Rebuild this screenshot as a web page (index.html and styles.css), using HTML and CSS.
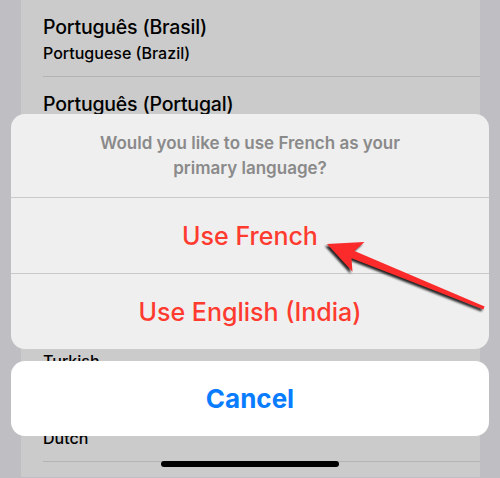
FILE: index.html
```html
<!DOCTYPE html>
<html>

<head lang="en">
    <meta charset="UTF-8">
    <title>Language</title>
    <link rel="stylesheet" href="styles.css">
</head>

<body>
    <div class="screen">
        <!-- language list behind the sheet -->
        <div class="list">
            <div class="row first">
                <p class="name">Português (Brasil)</p>
                <p class="sub">Portuguese (Brazil)</p>
            </div>
            <div class="row">
                <p class="name">Português (Portugal)</p>
                <p class="sub">Portuguese (Portugal)</p>
            </div>
            <div class="row">
                <p class="name">Русский</p>
                <p class="sub">Russian</p>
            </div>
            <div class="row">
                <p class="name">Svenska</p>
                <p class="sub">Swedish</p>
            </div>
            <div class="row">
                <p class="name">Türkçe</p>
                <p class="sub">Turkish</p>
            </div>
            <div class="row">
                <p class="name">Nederlands</p>
                <p class="sub">Dutch</p>
            </div>
        </div>

        <!-- action sheet -->
        <div class="sheet">
            <div class="group">
                <p class="title">Would you like to use French as your primary language?</p>
                <a href="#" class="action">Use French</a>
                <a href="#" class="action">Use English (India)</a>
            </div>
            <a href="#" class="cancel">Cancel</a>
        </div>

        <svg class="arrow" width="500" height="478" viewBox="0 0 500 478">
            <polygon points="327,244 364.5,242.1 354.5,250.9 484.6,306.6 483.4,309.4 351.5,258.3 352.5,271.7" />
        </svg>

        <div class="home"></div>
    </div>
</body>

</html>
```

FILE: styles.css
```css
/*reset*/
body,
p {
    margin: 0;
    padding: 0;
}

a {
    text-decoration: none;
}

body {
    background: #bfbec3;
    font-family: Inter, "Noto Sans", sans-serif;
    -webkit-font-smoothing: antialiased;
}

.screen {
    width: 500px;
    height: 478px;
    position: relative;
    overflow: hidden;
}

/*list*/
.list {
    margin: 0 20px 0 21px;
    background: #cbcbcb;
    height: 478px;
}

.row {
    margin-left: 22px;
    padding: 15px 0 13px;
    border-bottom: 1px solid #b3b3b3;
    color: #000;
}

.row.first {
    border-top: 1px solid #b3b3b3;
    margin-top: -1px;
}

.name {
    font-size: 19.5px;
    line-height: 24px;
    font-weight: 500;
    letter-spacing: -0.2px;
}

.sub {
    margin-top: 4px;
    font-size: 16px;
    line-height: 20px;
    font-weight: 500;
}

/*sheet*/
.sheet {
    position: absolute;
    left: 11px;
    right: 11px;
    top: 114px;
}

.group {
    background: #efefef;
    border-radius: 14px;
    overflow: hidden;
}

.title {
    height: 83px;
    padding: 0 80px;
    box-sizing: border-box;
    display: flex;
    align-items: center;
    justify-content: center;
    text-align: center;
    font-size: 17px;
    line-height: 25px;
    font-weight: 600;
    color: #8a8a8a;
}

.action {
    display: flex;
    align-items: center;
    justify-content: center;
    height: 75px;
    border-top: 1px solid #c9c9c9;
    font-size: 25px;
    font-weight: 500;
    color: #ff3b30;
}

.cancel {
    display: flex;
    align-items: center;
    justify-content: center;
    margin-top: 12px;
    height: 75px;
    background: #fff;
    border-radius: 14px;
    font-size: 26px;
    font-weight: 700;
    color: #0a7cff;
}

.arrow {
    position: absolute;
    left: 0;
    top: 0;
    fill: #fb2b2b;
    filter: drop-shadow(-2px 2px 1.2px rgba(0, 0, 0, 0.85));
}

.home {
    position: absolute;
    left: 161px;
    top: 461px;
    width: 178px;
    height: 6px;
    border-radius: 3px;
    background: #000;
}
```
